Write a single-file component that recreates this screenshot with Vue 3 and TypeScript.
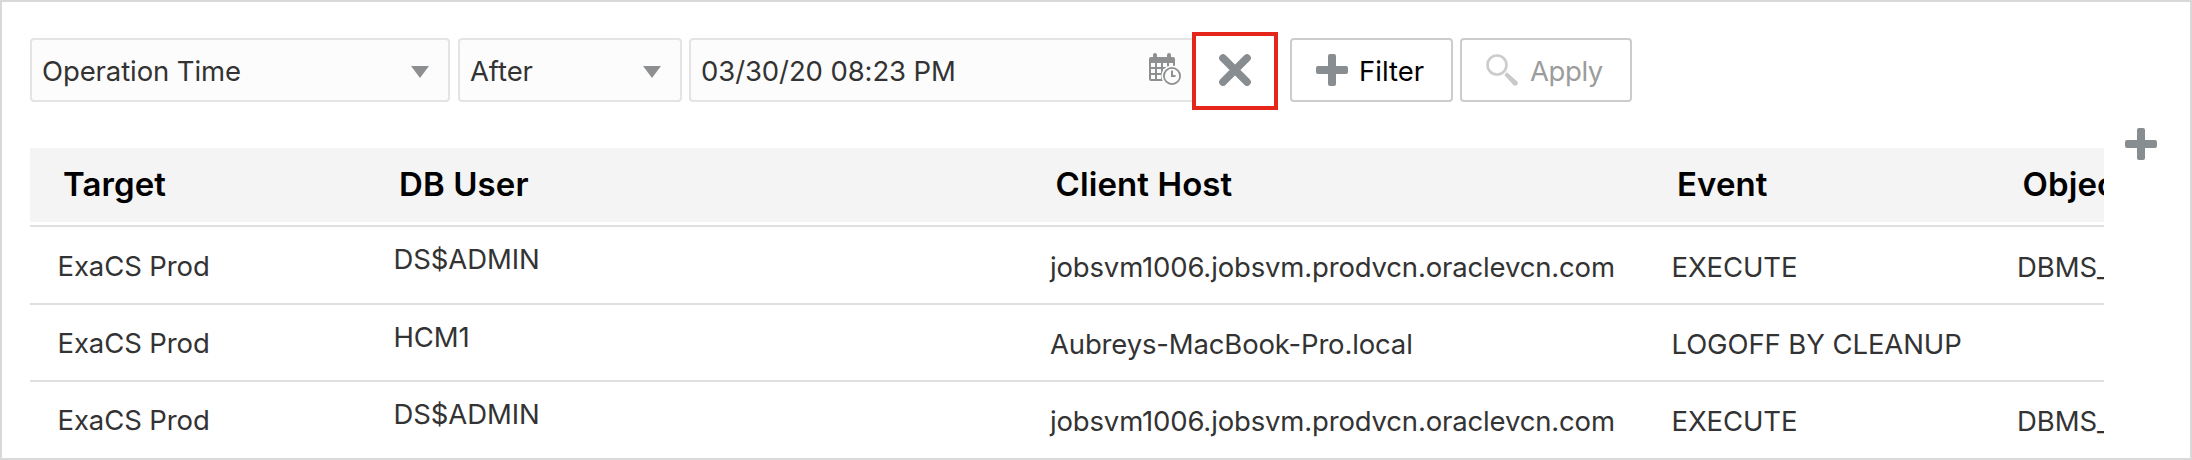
<script setup lang="ts">
interface AuditRow {
  target: string
  user: string
  host: string
  event: string
  object: string
}

const columns: string[] = ['Target', 'DB User', 'Client Host', 'Event', 'Object']

const rows: AuditRow[] = [
  { target: 'ExaCS Prod', user: 'DS$ADMIN', host: 'jobsvm1006.jobsvm.prodvcn.oraclevcn.com', event: 'EXECUTE', object: 'DBMS_SQL' },
  { target: 'ExaCS Prod', user: 'HCM1', host: 'Aubreys-MacBook-Pro.local', event: 'LOGOFF BY CLEANUP', object: '' },
  { target: 'ExaCS Prod', user: 'DS$ADMIN', host: 'jobsvm1006.jobsvm.prodvcn.oraclevcn.com', event: 'EXECUTE', object: 'DBMS_SQL' },
]
</script>

<template>
  <div class="panel">
    <div class="filters">
      <div class="field attribute">
        <span>Operation Time</span>
        <svg class="arrow" viewBox="0 0 18 12"><path d="M0 0H18L9 12Z" /></svg>
      </div>
      <div class="field operator">
        <span>After</span>
        <svg class="arrow" viewBox="0 0 18 12"><path d="M0 0H18L9 12Z" /></svg>
      </div>
      <div class="field date">
        <span>03/30/20 08:23 PM</span>
        <svg class="calendar" viewBox="0 0 32 32">
          <path fill="#8e8f90" d="M2 4H4V2Q4 0 6 0Q8 0 8 2V4H18V2Q18 0 20 0Q22 0 22 2V4H24Q26 4 26 6V28H2Q0 28 0 26V6Q0 4 2 4Z" />
          <path fill="#fcfcfc" d="M2 10H6V14H2ZM8 10H12V14H8ZM14 10H18V14H14ZM20 10H24V14H20ZM2 16H6V20H2ZM8 16H12V20H8ZM14 16H18V20H14ZM2 22H6V26H2ZM8 22H12V26H8Z" />
          <circle cx="23" cy="23" r="10.6" fill="#fcfcfc" />
          <circle cx="23" cy="23" r="8.1" fill="#fcfcfc" stroke="#8e8f90" stroke-width="1.8" />
          <path d="M23 17.5V23H26.5" fill="none" stroke="#8e8f90" stroke-width="2" />
        </svg>
      </div>
      <button class="remove" type="button" aria-label="Remove filter">
        <svg class="icon" viewBox="0 0 32 32"><path d="M4 4L28 28M28 4L4 28" fill="none" stroke="#878d90" stroke-width="7.6" stroke-linecap="round" /></svg>
      </button>
      <button class="action add" type="button">
        <svg class="icon" viewBox="0 0 32 32"><rect x="12" width="8" height="32" rx="2" fill="#878d90" /><rect y="12" width="32" height="8" rx="2" fill="#878d90" /></svg>
        <span>Filter</span>
      </button>
      <button class="action apply" type="button" disabled>
        <svg class="icon" viewBox="0 0 32 32">
          <circle cx="11" cy="11" r="9.5" fill="none" stroke="#cbcccd" stroke-width="2.6" />
          <path d="M18.3 20.9L20.9 18.3L31.3 27.6Q32.4 29.4 31 31Q29.4 32.4 27.6 31.3Z" fill="#c7c9ca" />
        </svg>
        <span>Apply</span>
      </button>
    </div>

    <div class="results">
      <div class="table">
        <div class="head grid">
          <div v-for="name in columns" :key="name" class="th">{{ name }}</div>
        </div>
        <div v-for="(row, i) in rows" :key="i" class="row grid">
          <div>{{ row.target }}</div>
          <div class="user">{{ row.user }}</div>
          <div class="low host">{{ row.host }}</div>
          <div class="low">{{ row.event }}</div>
          <div class="low">{{ row.object }}</div>
        </div>
      </div>
      <svg class="icon add-column" viewBox="0 0 32 32"><rect x="12" width="8" height="32" rx="2" fill="#878d90" /><rect y="12" width="32" height="8" rx="2" fill="#878d90" /></svg>
    </div>
  </div>
</template>

<style>
body {
  margin: 0;
  background: #fff;
}
</style>

<style scoped>
* {
  box-sizing: border-box;
}
.panel {
  width: 2192px;
  height: 460px;
  overflow: hidden;
  border: 2px solid #d9d9d9;
  padding: 30px 0 0 28px;
  background: #fff;
  font-family: Inter, "Liberation Sans", sans-serif;
  font-size: 27.5px;
  letter-spacing: -0.1px;
  color: #333;
}
.filters {
  display: flex;
  align-items: flex-start;
  height: 78px;
  margin-bottom: 38px;
}
.field {
  display: flex;
  align-items: center;
  justify-content: space-between;
  height: 64px;
  margin-top: 6px;
  border: 2px solid #e4e4e4;
  border-radius: 4px;
  background: #fcfcfc;
  white-space: pre;
  padding: 0 19px 0 10px;
}
.field span,
.action span {
  padding-top: 2px;
}
.attribute {
  width: 420px;
  margin-right: 8px;
}
.operator {
  width: 224px;
  margin-right: 7px;
}
.date {
  width: 503px;
  border-right: 0;
  border-radius: 4px 0 0 4px;
  padding-right: 11px;
}
.arrow {
  width: 18px;
  height: 12px;
  margin-top: 4px;
  fill: #8e8f90;
}
.calendar {
  width: 32px;
  height: 32px;
  margin-top: -2px;
}
.icon {
  display: block;
  flex: none;
  width: 32px;
  height: 32px;
}
button {
  font: inherit;
  letter-spacing: inherit;
  background: #fff;
}
.remove {
  width: 86px;
  height: 78px;
  margin-right: 12px;
  border: 4px solid #e5261a;
  padding: 0 0 2px 23px;
}
.action {
  display: flex;
  align-items: center;
  height: 64px;
  margin-top: 6px;
  border: 2px solid #ccc;
  border-radius: 4px;
  padding: 0 0 0 24px;
}
.add {
  width: 163px;
  margin-right: 7px;
  color: #000;
  letter-spacing: 0;
}
.add span {
  margin-left: 11px;
}
.apply {
  width: 172px;
  color: #9c9c9c;
  letter-spacing: -0.4px;
}
.apply span {
  margin-left: 12px;
}
.results {
  display: flex;
  align-items: flex-start;
}
.table {
  width: 2074px;
  overflow: hidden;
}
.grid {
  display: grid;
  grid-template-columns: 336px 656.5px 621.5px 345.5px 220px;
  white-space: nowrap;
}
.head {
  height: 74px;
  margin-bottom: 3px;
  background: #f4f4f4;
  color: #000;
  font-size: 33px;
  font-weight: 600;
  letter-spacing: 0.1px;
  line-height: 72px;
}
.th {
  padding-left: 33px;
}
.row {
  height: 77px;
  border-top: 2px solid #e0e0e0;
  line-height: 34px;
}
.row > div {
  padding: 21px 0 0 27.5px;
}
.row > .low {
  padding-top: 22px;
}
.row > .user {
  padding-top: 15px;
}
.row > .host {
  letter-spacing: -0.16px;
}
.head + .row {
  height: 78px;
}
.head + .row > div:not(.user) {
  margin-top: 1px;
}
.add-column {
  margin: -20px 0 0 21px;
}
</style>
